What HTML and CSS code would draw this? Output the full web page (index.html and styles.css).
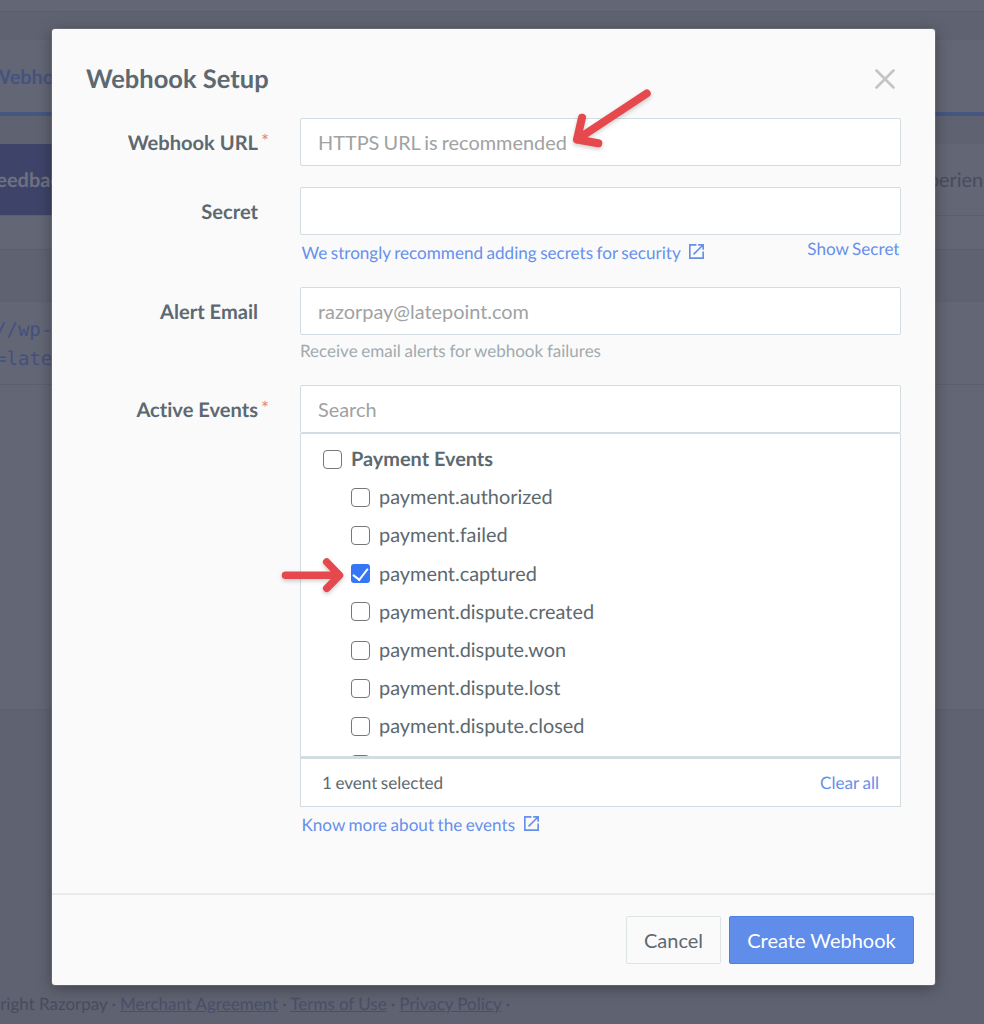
FILE: index.html
```
<!DOCTYPE html>
<html lang="en">
<head>
    <meta charset="UTF-8">
    <meta name="viewport" content="width=device-width, initial-scale=1.0">
    <title>Webhook Setup</title>
    <link rel="stylesheet" href="styles.css">
</head>
<body>
    <div class="page">
        <div class="topbar"></div>
        <div class="subbar"></div>
        <div class="tabs"><span class="tab-name">Webhooks</span></div>
        <div class="spacer"></div>
        <div class="banner">
            <div class="banner-title">Feedback</div>
            <div class="banner-text">experience</div>
        </div>
        <div class="toolbar"></div>
        <div class="table-head"></div>
        <div class="table-row"><div>//wp-</div><div>=late</div></div>
        <div class="table-rest"></div>
        <footer class="page-footer">
            <span class="copyright">© Copyright Razorpay · <a href="#">Merchant Agreement</a> · <a href="#">Terms of Use</a> · <a href="#">Privacy Policy</a> ·</span>
        </footer>
    </div>

    <div class="modal">
        <div class="modal-header">
            <h1>Webhook Setup</h1>
            <button class="close-btn" aria-label="Close">
                <svg width="20" height="20" viewBox="0 0 20 20"><path d="M1.5 1.5L18.5 18.5M18.5 1.5L1.5 18.5"/></svg>
            </button>
        </div>

        <div class="modal-body">
            <div class="field">
                <label for="url">Webhook URL<span class="required">*</span></label>
                <div class="control">
                    <input type="text" id="url" placeholder="HTTPS URL is recommended">
                </div>
            </div>

            <div class="field field-secret">
                <label for="secret">Secret</label>
                <div class="control">
                    <input type="text" id="secret">
                    <div class="links">
                        <a href="#" class="link">We strongly recommend adding secrets for security
                            <svg class="external" viewBox="3 3 18 18"><path d="M19 19H5V5h7V3H3v18h18v-9h-2v7zM14 3v2h3.59l-9.83 9.83 1.41 1.41L19 6.41V10h2V3h-7z"/></svg></a>
                        <a href="#" class="link show-secret">Show Secret</a>
                    </div>
                </div>
            </div>

            <div class="field field-email">
                <label for="email">Alert Email</label>
                <div class="control">
                    <input type="text" id="email" placeholder="razorpay@latepoint.com">
                    <p class="help">Receive email alerts for webhook failures</p>
                </div>
            </div>

            <div class="field">
                <label for="search">Active Events<span class="required">*</span></label>
                <div class="control">
                    <input type="text" id="search" class="search" placeholder="Search">
                    <div class="events">
                        <label class="event group"><input type="checkbox"><span>Payment Events</span></label>
                        <label class="event"><input type="checkbox"><span>payment.authorized</span></label>
                        <label class="event"><input type="checkbox"><span>payment.failed</span></label>
                        <label class="event"><input type="checkbox" checked><span>payment.captured</span></label>
                        <label class="event"><input type="checkbox"><span>payment.dispute.created</span></label>
                        <label class="event"><input type="checkbox"><span>payment.dispute.won</span></label>
                        <label class="event"><input type="checkbox"><span>payment.dispute.lost</span></label>
                        <label class="event"><input type="checkbox"><span>payment.dispute.closed</span></label>
                        <label class="event"><input type="checkbox"></label>
                    </div>
                    <div class="events-footer">
                        <span>1 event selected</span>
                        <a href="#" class="link">Clear all</a>
                    </div>
                    <div class="links links-events">
                        <a href="#" class="link">Know more about the events
                            <svg class="external" viewBox="3 3 18 18"><path d="M19 19H5V5h7V3H3v18h18v-9h-2v7zM14 3v2h3.59l-9.83 9.83 1.41 1.41L19 6.41V10h2V3h-7z"/></svg></a>
                    </div>
                </div>
            </div>
        </div>

        <div class="modal-footer">
            <button class="btn">Cancel</button>
            <button class="btn btn-primary">Create Webhook</button>
        </div>
    </div>

    <svg class="arrow arrow-url" width="100" height="70" viewBox="0 0 100 70">
        <path d="M86.7 13.5L17 59.5M22 37.7L17 59.5L38.3 63.3"/>
    </svg>
    <svg class="arrow arrow-event" width="80" height="50" viewBox="0 0 80 50">
        <path d="M11.5 25.3H65M52.7 12L65.5 25.3L52.7 38.3"/>
    </svg>
</body>
</html>
```
FILE: styles.css
```
* {
    box-sizing: border-box;
}
body {
    margin: 0;
    height: 1024px;
    position: relative;
    overflow: hidden;
    font-family: Lato, "Liberation Sans", sans-serif;
    font-size: 19.9px;
    font-variant-ligatures: none;
    color: #5d6971;
    background: #5f6270;
    text-rendering: geometricPrecision;
}
a {
    text-decoration: none;
}

/* page behind the modal */
.page {
    height: 1024px;
    display: flex;
    flex-direction: column;
    color: #484c5e;
}
.topbar {
    height: 12px;
    background: #636674;
    border-bottom: 1px solid #5b5e6b;
}
.subbar {
    height: 28px;
}
.tabs {
    height: 76px;
    background: #636674;
    border-bottom: 4px solid #465682;
    line-height: 74px;
    overflow: hidden;
}
.tab-name {
    margin-left: -10px;
    font-weight: 700;
    color: #46537f;
}
.spacer {
    height: 28px;
}
.banner {
    height: 71px;
    display: flex;
    justify-content: space-between;
    line-height: 73px;
    background: #636674;
    overflow: hidden;
}
.banner-title {
    width: 500px;
    text-indent: -14px;
    font-weight: 700;
    color: #6e7280;
    background: #3e4469;
}
.banner-text {
    margin-right: -19px;
}
.toolbar {
    height: 34px;
    background: #636674;
    border-top: 1px solid #5c5f6d;
}
.table-head {
    height: 53px;
    border-top: 1px solid #5a5d6a;
    border-bottom: 1px solid #5c5f6d;
}
.table-row {
    height: 83px;
    padding-top: 14px;
    text-indent: -5px;
    font-family: "DejaVu Sans Mono", monospace;
    font-size: 19px;
    line-height: 29px;
    color: #445080;
    background: #636674;
    border-bottom: 1px solid #5c5f6d;
}
.table-rest {
    height: 325px;
    background: #636674;
    border-bottom: 1px solid #5c5f6d;
}
.page-footer {
    margin-top: auto;
    height: 38px;
    line-height: 36px;
    font-size: 17px;
    white-space: nowrap;
    display: flex;
}
.page-footer a {
    color: #4a4e68;
    text-decoration: underline;
}
.copyright {
    margin-left: -57px;
    word-spacing: -0.2px;
}

/* modal */
.modal {
    position: absolute;
    left: 52px;
    top: 29px;
    width: 883px;
    height: 956px;
    display: flex;
    flex-direction: column;
    background: #fafafa;
    border-radius: 3px;
    box-shadow: 0 0 0 1px rgba(130, 130, 140, 0.4), 0 3px 15px rgba(0, 0, 0, 0.35);
}
.modal-header {
    height: 89px;
    padding: 10px 40px 0 34px;
    display: flex;
    justify-content: space-between;
    align-items: center;
}
h1 {
    margin: 0;
    font-size: 25.5px;
    font-weight: 700;
}
.close-btn {
    display: flex;
    padding: 0;
    border: none;
    background: none;
    cursor: pointer;
}
.close-btn path {
    fill: none;
    stroke: #c2c4c5;
    stroke-width: 2.6;
    stroke-linecap: round;
}
.modal-body {
    flex: 1;
}
.field {
    display: flex;
    min-height: 48px;
    margin-bottom: 21px;
}
.field-secret {
    min-height: 79px;
}
.field-email {
    min-height: 77px;
}
.field > label {
    width: 248px;
    height: 48px;
    padding-right: 42px;
    font-size: 20.1px;
    line-height: 50px;
    text-align: right;
    font-weight: 700;
    position: relative;
}
.required {
    position: absolute;
    right: 31px;
    top: -1px;
    font-weight: 400;
    font-size: 19px;
    color: #e28683;
}
.control {
    width: 601px;
}
input[type="text"] {
    display: block;
    width: 100%;
    height: 48px;
    padding: 0 17px;
    border: 1px solid #d3dce0;
    border-radius: 2px;
    background: #fff;
    font-family: inherit;
    font-size: 19.9px;
    word-spacing: -1px;
    color: #5a666f;
    outline: none;
}
input[type="text"].search {
    padding-bottom: 1px;
}
input::placeholder {
    color: #a0a2a3;
}
.links {
    display: flex;
    justify-content: space-between;
    padding: 7px 1.5px 0;
    font-size: 17.1px;
    line-height: 21px;
    word-spacing: -0.9px;
}
.link {
    color: #6690ec;
}
.show-secret {
    margin-top: -4px;
}
.external {
    width: 15px;
    height: 15px;
    margin-left: 5px;
    fill: #6690ec;
}
.help {
    margin: 5px 0 0;
    font-size: 17px;
    line-height: 21px;
    word-spacing: -0.6px;
    color: #a0abb0;
}
.events {
    height: 325px;
    padding-top: 6px;
    overflow: hidden;
    background: #fff;
    border: 1px solid #d3dce0;
    border-width: 1px 1px 2px;
}
.event {
    display: flex;
    align-items: center;
    height: 38.2px;
    padding-left: 50px;
}
.event.group {
    padding-left: 22px;
    font-weight: 700;
}
input[type="checkbox"] {
    appearance: none;
    width: 19px;
    height: 19px;
    margin: 0 9px 0 0;
    border: 1.5px solid #777;
    border-radius: 4px;
    background: #fff;
}
input[type="checkbox"]:checked {
    border: none;
    border-radius: 3px;
    background: #3576f5;
    display: flex;
    align-items: center;
    justify-content: center;
}
input[type="checkbox"]:checked::after {
    content: "";
    width: 7px;
    height: 13px;
    margin-top: -3px;
    border: solid #fff;
    border-width: 0 2.6px 2.6px 0;
    transform: rotate(38deg);
}
.events-footer {
    height: 49px;
    padding: 0 21px;
    display: flex;
    justify-content: space-between;
    align-items: center;
    font-size: 17.1px;
    word-spacing: -0.9px;
    background: #fff;
    border: 1px solid #d3dce0;
}
.modal-footer {
    height: 92px;
    padding: 0 21px;
    display: flex;
    justify-content: flex-end;
    align-items: center;
    gap: 8px;
    border-top: 2px solid #e9ebec;
}
.btn {
    width: 95px;
    height: 48px;
    padding: 0;
    font-family: inherit;
    font-size: 20px;
    color: #5d6971;
    background: #fafafa;
    border: 1px solid #dde4e6;
    border-radius: 2px;
    cursor: pointer;
}
.btn-primary {
    width: 185px;
    color: #fff;
    background: #5f8de9;
    border-color: #4f80e6;
}

/* pointers */
.arrow {
    position: absolute;
    filter: drop-shadow(0 2px 2px rgba(0, 0, 0, 0.2));
}
.arrow path {
    fill: none;
    stroke: #e5484d;
    stroke-width: 8;
    stroke-linecap: round;
    stroke-linejoin: round;
}
.arrow-url {
    left: 560px;
    top: 80px;
}
.arrow-event {
    left: 274px;
    top: 550px;
}
.arrow-event path {
    stroke-width: 7.5;
}
```
